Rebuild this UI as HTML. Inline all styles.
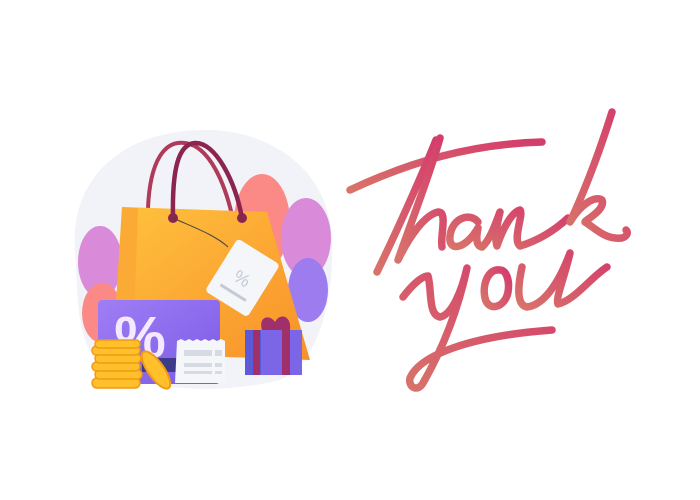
<!DOCTYPE html>
<html><head><meta charset="utf-8"><style>
html,body{margin:0;padding:0;background:#fff;width:700px;height:500px;overflow:hidden;font-family:"Liberation Sans",sans-serif}
.t{position:absolute;left:380px;top:220px;color:#fff;opacity:0.01;font-size:10px}
</style></head><body>
<span class="t">Thank you</span>
<svg width="700" height="500" viewBox="0 0 700 500" style="position:absolute;left:0;top:0">
<defs>
<linearGradient id="g" x1="0" y1="1" x2="1" y2="0"><stop offset="0" stop-color="#d8736a"/><stop offset="1" stop-color="#d43c6c"/></linearGradient>
<linearGradient id="bag" x1="0" y1="0" x2="1" y2="1"><stop offset="0" stop-color="#ffc23d"/><stop offset="1" stop-color="#f8902a"/></linearGradient>
<linearGradient id="card" x1="0" y1="0" x2="1" y2="1"><stop offset="0" stop-color="#a07ef5"/><stop offset="1" stop-color="#7a5ae6"/></linearGradient>
</defs>
<path d="M75,250 C70,180 120,132 200,130 C270,128 330,170 332,240 C334,300 320,360 280,380 C220,395 130,392 95,360 C75,330 78,290 75,250Z" fill="#f1f3f8"/>
<ellipse cx="262" cy="222" rx="28" ry="48" fill="#fb8a86"/>
<ellipse cx="306" cy="238" rx="25" ry="40" fill="#d98ad8"/>
<ellipse cx="308" cy="290" rx="20" ry="32" fill="#9d7cf0"/>
<ellipse cx="100" cy="262" rx="22" ry="36" fill="#d98ad8"/>
<ellipse cx="102" cy="313" rx="20" ry="30" fill="#fb8a86"/>
<path d="M148,208 C150,160 165,140 185,143 C210,146 225,185 232,215" fill="none" stroke="#b03a5a" stroke-width="4"/>
<path d="M122,207 L267,212 L310,360 L113,353Z" fill="url(#bag)"/>
<path d="M122,207 L138,208 L133,355 L113,353Z" fill="#fbab35"/>
<path d="M173,218 C172,170 178,144 195,143 C215,142 235,180 242,218" fill="none" stroke="#8c2450" stroke-width="4.5"/>
<circle cx="173" cy="218" r="5" fill="#8c2450"/><circle cx="242" cy="218" r="5" fill="#8c2450"/>
<path d="M173,218 C195,228 215,235 228,247" fill="none" stroke="#444" stroke-width="1"/>
<g transform="rotate(32 243 277)">
<rect x="218" y="247" width="50" height="62" rx="4" fill="#f4f6fa"/>
<text x="243" y="285" font-size="18" fill="#c5c9d4" text-anchor="middle" font-family="Liberation Sans">%</text>
<rect x="228" y="294" width="30" height="3" fill="#c5c9d4"/>
</g>
<rect x="98" y="300" width="122" height="84" rx="4" fill="url(#card)"/>
<rect x="142" y="358" width="78" height="14" fill="#3e3a8a"/>
<text x="140" y="357" font-size="58" font-weight="bold" fill="#f3eaff" text-anchor="middle" font-family="Liberation Sans">%</text>
<path d="M177,341 l4,-2 4,2 4,-2 4,2 4,-2 4,2 4,-2 4,2 4,-2 4,2 4,-2 4,2 0,42 -50,0Z" fill="#f4f6fa"/>
<rect x="184" y="350" width="28" height="6" fill="#d6dae3"/><rect x="215" y="350" width="7" height="6" fill="#d6dae3"/>
<rect x="184" y="363" width="28" height="4" fill="#d6dae3"/><rect x="215" y="363" width="7" height="4" fill="#d6dae3"/>
<rect x="184" y="371" width="28" height="3" fill="#d6dae3"/><rect x="215" y="371" width="7" height="3" fill="#d6dae3"/>
<g fill="#ffc02c" stroke="#f29a15" stroke-width="1.5">
<rect x="92" y="378" width="48" height="10" rx="5"/>
<rect x="95" y="370" width="47" height="9" rx="4.5"/>
<rect x="92" y="362" width="48" height="9" rx="4.5"/>
<rect x="95" y="354" width="46" height="9" rx="4.5"/>
<rect x="92" y="346" width="48" height="9" rx="4.5"/>
<rect x="95" y="340" width="45" height="8" rx="4"/>
</g>
<ellipse cx="156" cy="370" rx="8" ry="22" transform="rotate(-35 156 370)" fill="#ffc02c" stroke="#f29a15" stroke-width="2"/>
<rect x="245" y="330" width="57" height="45" fill="#7a66e6"/>
<rect x="245" y="330" width="16" height="45" fill="#5c5ad8"/>
<rect x="253" y="330" width="7" height="45" fill="#a0306a"/>
<rect x="282" y="330" width="8" height="45" fill="#a0306a"/>
<path d="M262,330 C258,316 270,314 275,322 C280,312 292,316 290,330Z" fill="#a0306a"/>
<g fill="none" stroke="url(#g)" stroke-width="7.5" stroke-linecap="round" stroke-linejoin="round">
<path d="M350,190 C410,162 470,144 542,142"/>
<path d="M436,140 C420,180 395,235 377,272"/>
<path d="M440,138 C428,180 410,225 398,260 C410,235 425,215 438,212 C448,212 440,235 442,247"/>
<path d="M478,222 C470,212 452,218 450,236 C448,252 465,250 478,228 C476,238 476,246 482,247 C490,240 495,225 500,212 C496,228 495,240 497,246 C503,228 512,212 520,210 C524,214 512,240 520,246 C540,240 555,230 568,218"/>
<path d="M612,112 C600,150 585,190 570,222 C580,205 595,195 602,200 C606,210 585,220 585,222 C595,228 605,240 622,238 C628,236 628,232 626,230"/>
<path d="M403,297 C412,285 422,276 428,276 C432,290 428,315 440,317 C452,315 462,290 467,268 C458,310 442,350 423,383 C418,392 408,388 410,378 C420,355 470,336 552,330"/>
<path d="M500,270 C488,268 482,285 485,298 C488,312 505,308 508,292 C510,280 506,270 500,270"/>
<path d="M522,267 C518,285 516,305 527,307 C545,305 560,280 570,253 C565,275 555,300 558,304 C575,300 590,278 607,267"/>
</g>
</svg>
</body></html>
